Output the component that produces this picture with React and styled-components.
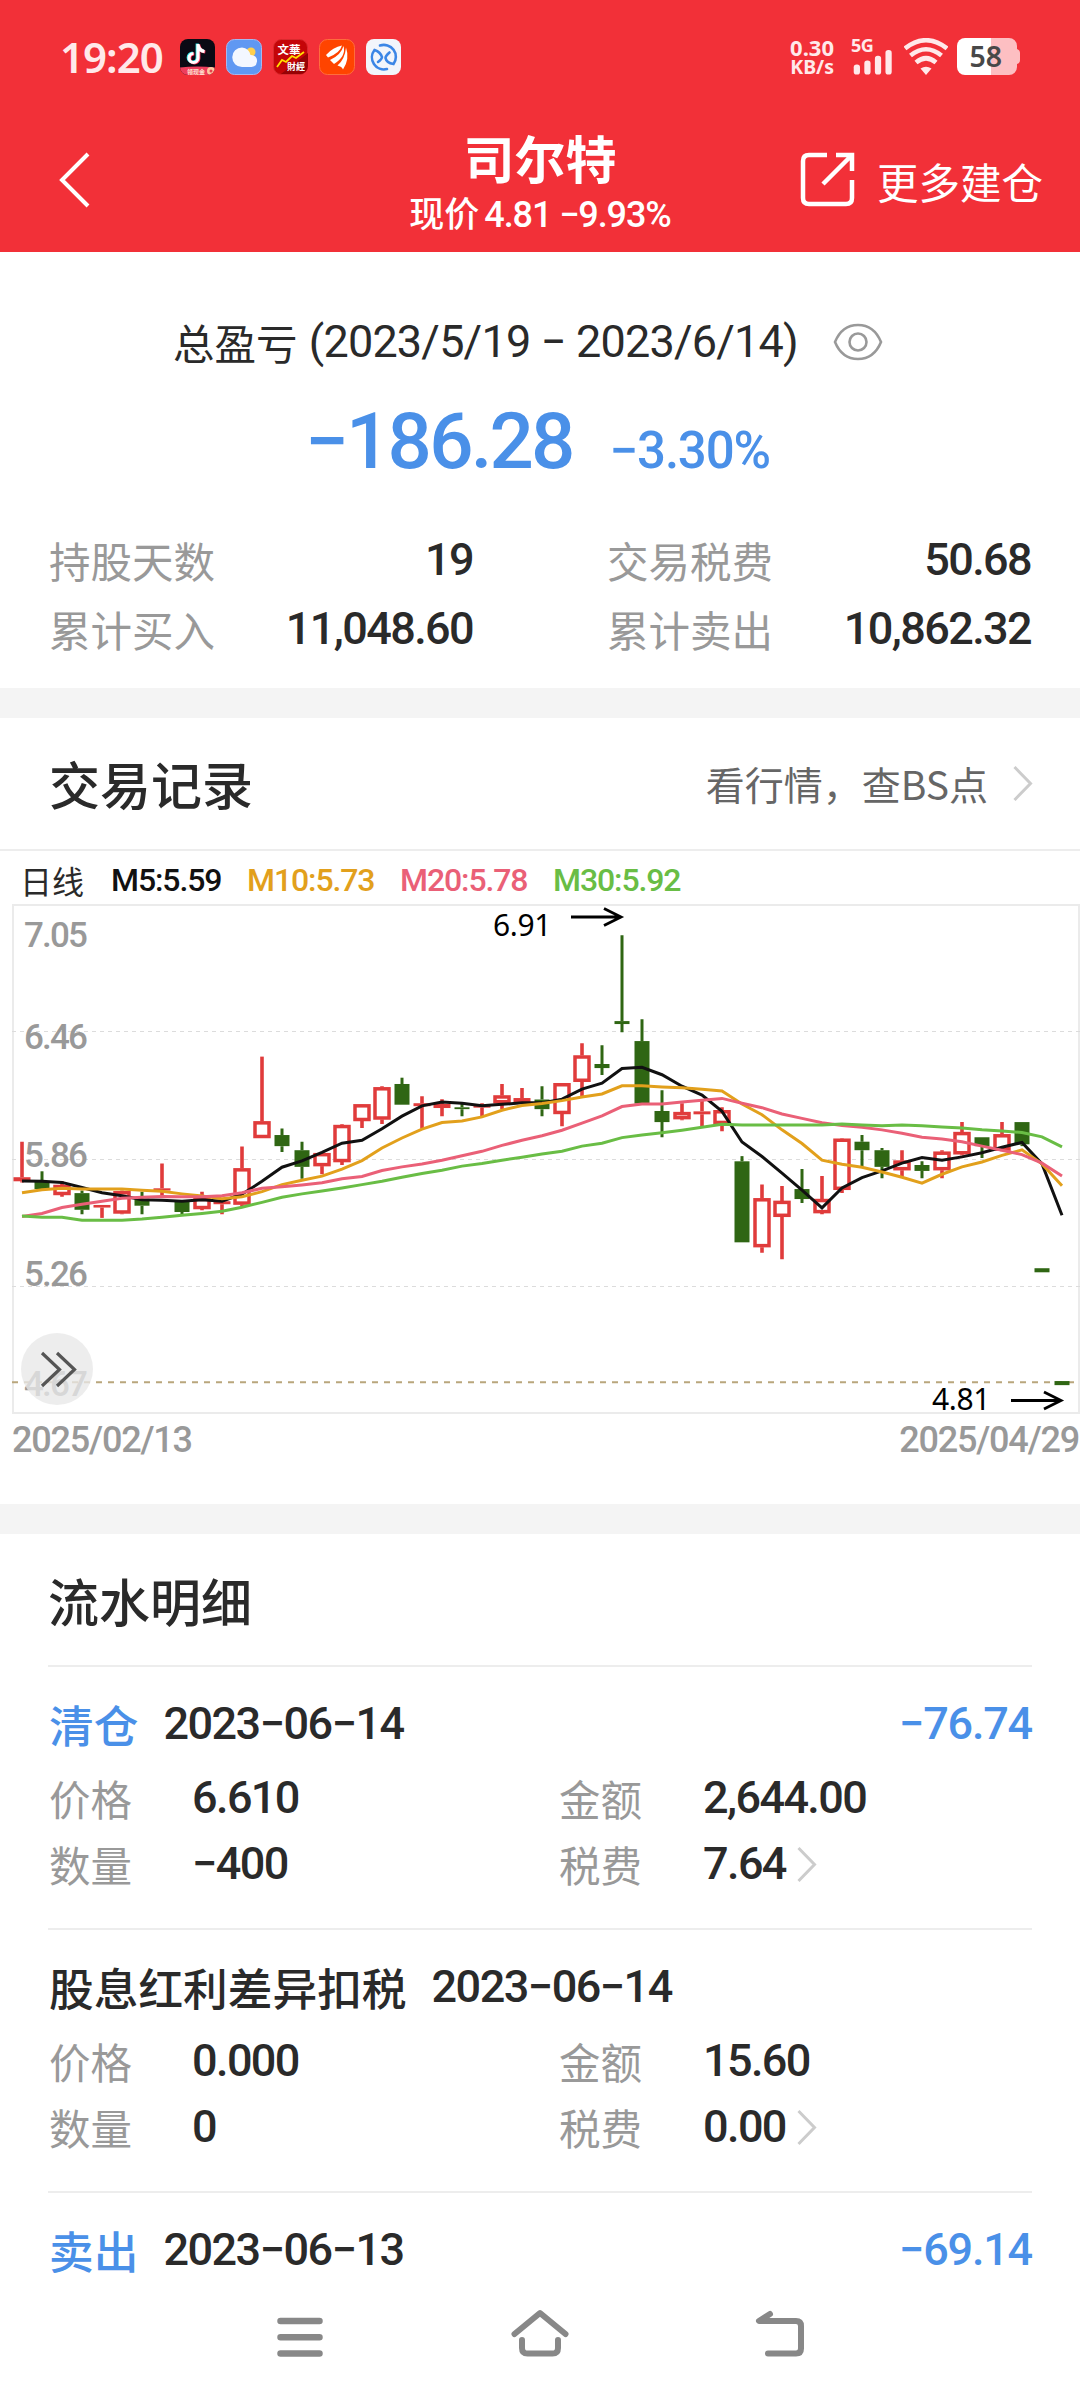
import React from "react";
import styled, { createGlobalStyle } from "styled-components";

const Global = createGlobalStyle`
  * { box-sizing: border-box; }
  html, body { margin: 0; padding: 0; background: #fff; }
`;

const CJK = `"Noto Sans CJK SC", sans-serif`;
const NUM = `Roboto, "Noto Sans CJK SC", sans-serif`;

const Screen = styled.div`
  width: 1080px;
  height: 2400px;
  overflow: hidden;
  display: flex;
  flex-direction: column;
  background: #fff;
  color: #2a2a2a;
  font-family: ${CJK};
`;

const Txt = styled.span`
  display: block;
  white-space: pre;
  font-family: ${CJK};
  font-size: ${(p) => p.$size || 41.5}px;
  line-height: ${(p) => p.$lh || 60}px;
  color: ${(p) => p.$color || "#2a2a2a"};
  font-weight: ${(p) => p.$weight || 400};
`;

const Num = styled.span`
  display: block;
  white-space: pre;
  font-family: ${NUM};
  font-weight: ${(p) => p.$weight || 500};
  font-size: ${(p) => p.$size || 45}px;
  line-height: ${(p) => p.$lh || 60}px;
  letter-spacing: ${(p) => (p.$ls === undefined ? -1.6 : p.$ls)}px;
  color: ${(p) => p.$color || "#2a2a2a"};
`;

const Header = styled.header`
  height: 252px;
  flex: none;
  background: #f23038;
  color: #fff;
  display: flex;
  flex-direction: column;
`;

const StatusBar = styled.div`
  height: 113px;
  padding: 0 60px;
  display: flex;
  align-items: center;
  justify-content: space-between;
`;

const StatusGroup = styled.div`
  display: flex;
  align-items: center;
  gap: ${(p) => p.$gap}px;
`;

const Clock = styled.span`
  width: 109px;
  white-space: nowrap;
  font-family: "Noto Sans", sans-serif;
  font-weight: 600;
  font-size: 42px;
  letter-spacing: -1px;
  line-height: 50px;
  color: #ffe9ea;
`;

const Speed = styled.div`
  width: 46px;
  margin-right: 8px;
  display: flex;
  flex-direction: column;
  align-items: flex-end;
  font-family: "Noto Sans", sans-serif;
  font-weight: 700;
  color: #ffe9ea;
`;

const SpeedLine = styled.span`
  font-size: ${(p) => p.$size}px;
  line-height: 20px;
`;

const TitleBar = styled.div`
  height: 139px;
  display: grid;
  grid-template-columns: 400px 280px 400px;
`;

const BackCell = styled.div`
  padding: 39px 0 0 58px;
`;

const TitleCell = styled.div`
  display: flex;
  flex-direction: column;
  align-items: center;
  padding-top: 11px;
`;

const PriceLine = styled.div`
  display: flex;
  align-items: baseline;
  gap: 5px;
`;

const MoreCell = styled.div`
  display: flex;
  align-items: flex-start;
  padding: 39px 0 0 120px;
  gap: 21px;
`;

const Summary = styled.section`
  height: 436px;
  flex: none;
  padding: 60px 49px 0;
  display: flex;
  flex-direction: column;
`;

const Period = styled.div`
  height: 60px;
  display: flex;
  align-items: center;
  padding-left: 124px;
`;

const PeriodDates = styled.div`
  padding-left: 2px;
`;

const EyeBox = styled.div`
  height: 60px;
  display: flex;
  align-items: center;
  margin-left: auto;
  padding-right: 148px;
`;

const Profit = styled.div`
  height: 130px;
  display: flex;
  align-items: baseline;
  padding: 5px 0 0 256px;
`;

const Stats = styled.div`
  display: grid;
  grid-template-columns: 424px 424px;
  column-gap: 134px;
  row-gap: 9px;
  padding-top: 28px;
`;

const Stat = styled.div`
  height: 60px;
  display: flex;
  justify-content: space-between;
`;

const Band = styled.div`
  height: 30px;
  flex: none;
  background: #f4f4f4;
`;

const RecordHead = styled.div`
  height: 133px;
  flex: none;
  border-bottom: 2px solid #ededed;
  padding: 0 47px 2px 49px;
  display: flex;
  align-items: center;
  justify-content: space-between;
`;

const LinkRow = styled.div`
  display: flex;
  align-items: center;
  gap: 25px;
`;

const Legend = styled.div`
  height: 53px;
  flex: none;
  padding: 5px 0 0 20px;
  display: flex;
  align-items: center;
`;

const LegendItem = styled.div`
  width: ${(p) => p.$w}px;
`;

const ChartBox = styled.div`
  height: 510px;
  flex: none;
  padding-left: 12px;
`;

const Dates = styled.div`
  height: 90px;
  flex: none;
  padding: 4px 1px 0 12px;
  display: flex;
  justify-content: space-between;
`;

const Flow = styled.section`
  flex: 1;
  min-height: 0;
  padding: 0 48px;
`;

const FlowHead = styled.div`
  height: 131px;
  display: flex;
  align-items: center;
`;

const Entry = styled.article`
  height: ${(p) => (p.$short ? 88 : 263)}px;
  border-top: 2px solid #ededed;
  padding-top: 27px;
`;

const EntryHead = styled.div`
  height: 74px;
  display: flex;
  padding-left: 1px;
`;

const EntryAmount = styled.div`
  margin-left: auto;
`;

const Fields = styled.div`
  display: grid;
  grid-template-columns: 143px 367px 144px 1fr;
  grid-auto-rows: 66px;
  padding-left: 1px;
`;

const FieldValue = styled.div`
  display: flex;
  gap: 11px;
`;

const NavBar = styled.nav`
  height: 120px;
  flex: none;
  background: #fff;
  display: grid;
  grid-template-columns: 240px 240px 240px;
  justify-content: center;
  justify-items: center;
  padding-top: 26px;
`;

const Chevron = () => (
  <svg width="20" height="60" viewBox="0 0 20 60">
    <path d="M1.5 14L17.5 30.5L1.5 47" fill="none" stroke="#ccc" strokeWidth="3" />
  </svg>
);

const TikTokIcon = () => (
  <svg width="35" height="36" viewBox="0 0 35 36">
    <clipPath id="tk"><rect width="35" height="36" rx="8" /></clipPath>
    <g clipPath="url(#tk)">
      <rect width="35" height="36" fill="#0a0a14" />
      <path d="M18 5v14a4.500 4.500 0 1 1-4.500-4.500M18 6c1 4 3 6 6.500 6.500" transform="translate(-.8 -.5)" fill="none" stroke="#25e5e5" strokeWidth="3.200" />
      <path d="M18 5v14a4.500 4.500 0 1 1-4.500-4.500M18 6c1 4 3 6 6.500 6.500" transform="translate(.8 .5)" fill="none" stroke="#ff3358" strokeWidth="3.200" />
      <path d="M18 5v14a4.500 4.500 0 1 1-4.500-4.500M18 6c1 4 3 6 6.500 6.500" fill="none" stroke="#fff" strokeWidth="3.200" />
      <path d="M0 28.500Q17 26.500 35 28.500V36H0z" fill="#ee3e5d" />
      <text x="7" y="34.500" fontSize="6" fontWeight="700" fill="#ffe2cf" fontFamily="Noto Sans CJK SC">领现金</text>
      <circle cx="31" cy="32" r="4" fill="#ffc9a0" />
      <circle cx="31" cy="32" r="1.500" fill="#e8414f" />
    </g>
  </svg>
);

const WeatherIcon = () => (
  <svg width="36" height="36" viewBox="0 0 36 36">
    <rect x=".5" y=".5" width="35" height="35" rx="8" fill="#6098f2" stroke="#a7b7ee" />
    <circle cx="25" cy="13" r="4.500" fill="#ffcf4d" />
    <path d="M16 8.500a9.700 9.700 0 1 0 0 19.500h9.500a6 6 0 0 0 1-11.800a6 6 0 0 0-2-.2A9.500 9.500 0 0 0 16 8.500z" fill="#f3f7ff" />
  </svg>
);

const FinanceIcon = () => (
  <svg width="35" height="36" viewBox="0 0 35 36">
    <rect x=".5" y=".5" width="34" height="35" rx="8" fill="#c40508" stroke="#d92a2e" />
    <path d="M8 35L35 14V27a8 8 0 0 1-8 8z" fill="#960205" />
    <text x="4.500" y="15" fontSize="11.500" fontWeight="700" fill="#fff" fontFamily="Noto Sans CJK SC">文華</text>
    <text x="14" y="31" fontSize="9" fontWeight="700" fill="#fff" fontFamily="Noto Sans CJK SC">財經</text>
    <path d="M4 28l5-7l4 2l6-6l4 2l8-6" fill="none" stroke="#ffe100" strokeWidth="1.800" />
  </svg>
);

const WingIcon = () => (
  <svg width="36" height="36" viewBox="0 0 36 36">
    <rect x=".5" y=".5" width="35" height="35" rx="8" fill="#ff4400" stroke="#ff6d3c" />
    <path d="M7 16Q14 8 23 6.500Q21 14 9 18.500zM11 21Q22 16 24.500 7Q27.500 17 15 25zM18.500 26.500Q26 20 27 8.500Q31 20 24 30.500Q23 27.500 18.500 26.500z" fill="#fff" />
  </svg>
);

const LoopIcon = () => (
  <svg width="35" height="36" viewBox="0 0 35 36">
    <rect width="35" height="36" rx="8" fill="#f2f5fb" />
    <g fill="none" stroke="#3b86e6" strokeWidth="2.600" strokeLinecap="round">
      <path d="M14 6.500A12 12 0 0 1 27.500 25q-7-1-8-6q0-2 4-5.500" />
      <path d="M21 30A12 12 0 0 1 8.500 11q6 2 7.500 7q0 2-4 5" />
    </g>
  </svg>
);

const SignalBox = styled.div`
  width: 42px;
  height: 37px;
  margin-right: 2px;
  display: flex;
  flex-direction: column;
`;

const NetLabel = styled.span`
  height: 12px;
  font: 700 18px/15px "Noto Sans", sans-serif;
  letter-spacing: -0.5px;
  color: #ffe9ea;
`;

const Signal = () => (
  <SignalBox>
    <NetLabel>5G</NetLabel>
    <svg width="42" height="26" viewBox="0 0 42 26">
      <g fill="#ffe9ea">
        <rect x="2" y="15" width="6.500" height="10.500" rx="3" />
        <rect x="13" y="11" width="6.500" height="14.500" rx="3" />
        <rect x="24" y="6" width="6.500" height="19.500" rx="3" />
        <rect x="35" y="0" width="6.500" height="25.500" rx="3" />
      </g>
    </svg>
  </SignalBox>
);

const Wifi = () => (
  <svg width="44" height="37" viewBox="0 0 44 37">
    <g fill="none" stroke="#ffe9ea" strokeWidth="4.600">
      <path d="M1 10.500Q22-6 43 10.500" />
      <path d="M6.500 17.500Q22 5 37.500 17.500" />
      <path d="M12 24.500Q22 16 32 24.500" />
    </g>
    <path d="M16.500 30.500Q22 27 27.500 30.500L22 37z" fill="#ffe9ea" />
  </svg>
);

const Battery = () => (
  <svg width="63" height="37" viewBox="0 0 63 37">
    <path d="M34 0h18a8 8 0 0 1 8 8v3q3 1 3 4v7q0 3-3 4v3a8 8 0 0 1-8 8H34z" fill="#fdbfc2" />
    <path d="M34 0H8a8 8 0 0 0-8 8v21a8 8 0 0 0 8 8h26z" fill="#fff" />
    <text x="12.500" y="28.500" fontSize="28.500" fontWeight="600" fill="#484848" fontFamily="Noto Sans">58</text>
  </svg>
);

const CHART_W = 1068;
const toY = (v) => (v - 37.5) / 2.703;
const toX = (i) => 10 + i * 20;

const candles = [
  ["r", 680, 776, 787, 790], ["g", 760, 788, 808, 808], ["r", 787, 797, 824, 829], ["g", 812, 819, 864, 876],
  ["r", 851, 851, 858, 886], ["r", 812, 814, 874, 876], ["g", 815, 834, 853, 876], ["r", 739, 806, 812, 825],
  ["g", 838, 840, 870, 876], ["r", 815, 832, 862, 865], ["r", 840, 841, 849, 876], ["r", 693, 752, 850, 854],
  ["r", 450, 625, 670, 670], ["g", 644, 662, 692, 708], ["g", 680, 703, 748, 780], ["r", 711, 711, 746, 768],
  ["r", 633, 635, 735, 743], ["r", 578, 579, 624, 643], ["r", 530, 533, 620, 632], ["g", 507, 524, 580, 580],
  ["r", 557, 576, 584, 645], ["r", 565, 578, 589, 611], ["g", 578, 587, 592, 611], ["r", 576, 582, 588, 612],
  ["r", 524, 555, 576, 592], ["r", 535, 562, 574, 576], ["g", 530, 566, 592, 611], ["r", 521, 522, 605, 638],
  ["r", 414, 447, 518, 560], ["g", 419, 470, 481, 500], ["g", 122, 354, 362, 384], ["g", 349, 408, 577, 577],
  ["g", 541, 597, 627, 668], ["r", 576, 600, 619, 622], ["r", 570, 598, 606, 638], ["r", 587, 595, 632, 652],
  ["g", 719, 733, 952, 952], ["r", 796, 833, 965, 980], ["r", 800, 840, 883, 998], ["g", 754, 808, 835, 846],
  ["r", 773, 835, 873, 876], ["r", 671, 672, 810, 819], ["g", 662, 680, 703, 747], ["g", 697, 703, 748, 779],
  ["r", 703, 731, 757, 775], ["g", 733, 743, 759, 779], ["r", 703, 707, 757, 779], ["r", 627, 654, 714, 717],
  ["g", 668, 668, 692, 724], ["r", 627, 660, 704, 706], ["g", 627, 627, 687, 692], ["g", 1022, 1022, 1033, 1033],
  ["g", 1327, 1327, 1338, 1338],
];

const averages = [
  ["#111", [786, 787, 790, 804, 818, 826, 837, 838, 841, 837, 841, 822, 787, 749, 732, 709, 684, 676, 645, 611, 583, 573, 576, 583, 579, 575, 575, 565, 538, 522, 482, 479, 499, 530, 554, 598, 681, 720, 765, 811, 859, 805, 777, 759, 738, 723, 730, 721, 710, 695, 682, 740, 879]],
  ["#e2a01c", [818, 810, 806, 808, 808, 808, 811, 814, 821, 827, 834, 829, 815, 796, 784, 773, 754, 731, 697, 670, 646, 628, 624, 613, 595, 582, 577, 569, 559, 551, 529, 529, 532, 534, 538, 543, 578, 607, 648, 685, 730, 741, 749, 762, 776, 792, 768, 748, 735, 717, 702, 740, 799]],
  ["#ea6077", [882, 874, 858, 849, 841, 833, 830, 828, 829, 829, 826, 818, 806, 802, 797, 791, 780, 774, 758, 748, 740, 730, 718, 706, 690, 676, 664, 649, 630, 610, 585, 578, 578, 573, 568, 563, 576, 588, 605, 617, 629, 636, 641, 648, 657, 668, 673, 680, 692, 703, 715, 738, 773]],
  ["#69bd45", [881, 884, 884, 892, 892, 892, 889, 884, 879, 874, 868, 857, 844, 830, 821, 813, 805, 796, 787, 776, 766, 757, 746, 739, 730, 722, 713, 706, 692, 684, 669, 662, 656, 649, 641, 633, 635, 635, 635, 635, 635, 632, 635, 637, 635, 637, 640, 643, 648, 651, 655, 667, 694]],
];

const ChartSvg = styled.svg`
  display: block;
  overflow: visible;
`;

const AxisText = styled.text`
  font-family: Roboto, sans-serif;
  font-weight: 500;
  font-size: 35px;
  letter-spacing: -1.8px;
  fill: #999;
`;

const MarkText = styled.text`
  font-family: "Noto Sans", sans-serif;
  font-weight: 400;
  font-size: 30px;
  letter-spacing: -0.4px;
  fill: #000;
`;

const Candle = ({ i, c }) => {
  const [kind, hi, top, bot, lo] = c;
  const x = toX(i);
  const color = kind === "r" ? "#e03b3b" : "#2f6613";
  const h = toY(bot) - toY(top);
  const hollow = kind === "r" && h > 6;
  return (
    <g>
      <path
        d={`M${x} ${toY(hi)}V${toY(top)}M${x} ${toY(bot)}V${toY(lo)}`}
        stroke={color}
        strokeWidth={kind === "r" ? 3.6 : 3}
      />
      {hollow ? (
        <rect x={x - 7} y={toY(top) + 1.5} width="14" height={h - 3} fill="#fff" stroke={color} strokeWidth="3.5" />
      ) : (
        <rect x={x - (kind === "r" ? 8.5 : 7.5)} y={toY(top)} width={kind === "r" ? 17 : 15} height={h} fill={color} />
      )}
    </g>
  );
};

const Arrow = ({ x, y }) => (
  <path d={`M${x - 51} ${y}H${x - 1}M${x - 18} ${y - 8.5}L${x - 1} ${y}L${x - 18} ${y + 8.5}`} fill="none" stroke="#000" strokeWidth="2.8" />
);

const KLine = () => (
  <ChartSvg width={CHART_W} height="510" viewBox={`0 0 ${CHART_W} 510`}>
    <rect x="1" y="1" width="1066" height="508" fill="none" stroke="#ebebeb" strokeWidth="2" />
    {[382, 727, 1072].map((v) => (
      <path key={v} d={`M0 ${Math.floor(toY(v)) + 0.5}H1068`} stroke="#dcdcdc" strokeWidth="1.2" strokeDasharray="4 4" />
    ))}
    <path d={`M0 ${toY(1330)}H1068`} stroke="#b9a67c" strokeWidth="2" strokeDasharray="6 6" />
    {candles.map((c, i) => <Candle key={i} i={i} c={c} />)}
    <AxisText x="12" y="43">7.05</AxisText>
    <AxisText x="12" y="145">6.46</AxisText>
    <AxisText x="12" y="263">5.86</AxisText>
    <AxisText x="12" y="382">5.26</AxisText>
    <AxisText x="12" y="492">4.67</AxisText>
    {averages.map(([color, pts]) => (
      <polyline key={color} points={pts.map((v, i) => `${toX(i)},${toY(v)}`).join(" ")} fill="none" stroke={color} strokeWidth="3" />
    ))}
    <MarkText x="481" y="31.5">6.91</MarkText>
    <Arrow x={610} y={13} />
    <MarkText x="920" y="506">4.81</MarkText>
    <Arrow x={1050} y={496.5} />
    <circle cx="45" cy="465" r="36" fill="#e8e8e8" fillOpacity=".78" />
    <path d="M30 449l17.500 16.500L30 482M45 449l17.500 16.500L45 482" fill="none" stroke="#555" strokeWidth="3.200" />
  </ChartSvg>
);

const entries = [
  { type: "清仓", color: "#4a90e8", date: "2023−06−14", amount: "−76.74", price: "6.610", total: "2,644.00", qty: "−400", fee: "7.64" },
  { type: "股息红利差异扣税", date: "2023−06−14", price: "0.000", total: "15.60", qty: "0", fee: "0.00" },
  { type: "卖出", color: "#4a90e8", date: "2023−06−13", amount: "−69.14" },
];

const DateGap = styled.div`
  padding-left: ${(p) => p.$gap || 25}px;
`;

const EntryRow = ({ e }) => (
  <Entry $short={!e.price}>
    <EntryHead>
      <Txt $size={44.7} $weight={500} $color={e.color}>{e.type}</Txt>
      <DateGap><Num $ls={-1.5}>{e.date}</Num></DateGap>
      {e.amount && <EntryAmount><Num $ls={-1.2} $color="#4a90e8">{e.amount}</Num></EntryAmount>}
    </EntryHead>
    {e.price && (
      <Fields>
        <Txt $color="#999">价格</Txt>
        <Num>{e.price}</Num>
        <Txt $color="#999">金额</Txt>
        <Num>{e.total}</Num>
        <Txt $color="#999">数量</Txt>
        <Num>{e.qty}</Num>
        <Txt $color="#999">税费</Txt>
        <FieldValue><Num>{e.fee}</Num><Chevron /></FieldValue>
      </Fields>
    )}
  </Entry>
);

export default function App() {
  return (
    <Screen>
      <Global />
      <Header>
        <StatusBar>
          <StatusGroup $gap={11}>
            <Clock>19:20</Clock>
            <TikTokIcon />
            <WeatherIcon />
            <FinanceIcon />
            <WingIcon />
            <LoopIcon />
          </StatusGroup>
          <StatusGroup $gap={9}>
            <Speed>
              <SpeedLine $size={22}>0.30</SpeedLine>
              <SpeedLine $size={19.5}>KB/s</SpeedLine>
            </Speed>
            <Signal />
            <Wifi />
            <Battery />
          </StatusGroup>
        </StatusBar>
        <TitleBar>
          <BackCell>
            <svg width="34" height="56" viewBox="0 0 34 56">
              <path d="M30 2L4 28L30 54" fill="none" stroke="#fff" strokeWidth="4" />
            </svg>
          </BackCell>
          <TitleCell>
            <Txt $size={51} $lh={66} $weight={700} $color="#fff">司尔特</Txt>
            <PriceLine>
              <Txt $size={35} $lh={44} $weight={500} $color="#fff">现价</Txt>
              <Num $size={36} $lh={44} $ls={-1.1} $color="#fff">4.81 −9.93%</Num>
            </PriceLine>
          </TitleCell>
          <MoreCell>
            <svg width="56" height="56" viewBox="0 0 56 56">
              <path d="M27 3H9Q3 3 3 9V46Q3 52 9 52H46Q52 52 52 46V28M36 3H52V19M52 3L23 32" fill="none" stroke="#fff" strokeWidth="4.500" />
            </svg>
            <Txt $lh={58} $color="#fff">更多建仓</Txt>
          </MoreCell>
        </TitleBar>
      </Header>

      <Summary>
        <Period>
          <Txt>总盈亏 </Txt>
          <PeriodDates><Num $weight={400} $lh={64} $ls={-0.8}>(2023/5/19 − 2023/6/14)</Num></PeriodDates>
          <EyeBox>
            <svg width="50" height="38" viewBox="0 0 50 38">
              <path d="M2 19Q9 2 25 2T48 19Q41 36 25 36T2 19z" fill="none" stroke="#999" strokeWidth="2.600" />
              <circle cx="25" cy="19" r="8.500" fill="none" stroke="#999" strokeWidth="2.600" />
            </svg>
          </EyeBox>
        </Period>
        <Profit>
          <Num $size={78} $lh={130} $ls={-2.8} $color="#4a90e8">−186.28</Num>
          <DateGap $gap={37}><Num $size={51} $lh={130} $ls={-1.2} $color="#4a90e8">−3.30%</Num></DateGap>
        </Profit>
        <Stats>
          <Stat><Txt $color="#999">持股天数</Txt><Num>19</Num></Stat>
          <Stat><Txt $color="#999">交易税费</Txt><Num>50.68</Num></Stat>
          <Stat><Txt $color="#999">累计买入</Txt><Num>11,048.60</Num></Stat>
          <Stat><Txt $color="#999">累计卖出</Txt><Num>10,862.32</Num></Stat>
        </Stats>
      </Summary>

      <Band />
      <RecordHead>
        <Txt $size={51} $weight={500}>交易记录</Txt>
        <LinkRow>
          <Txt $size={39} $color="#666">看行情，查BS点</Txt>
          <Chevron />
        </LinkRow>
      </RecordHead>
      <Legend>
        <LegendItem $w={91}><Txt $size={32} $lh={44}>日线</Txt></LegendItem>
        <LegendItem $w={136}><Num $size={32} $lh={44} $ls={-1.1} $color="#111">M5:5.59</Num></LegendItem>
        <LegendItem $w={153}><Num $size={32} $lh={44} $ls={-1.1} $color="#e2a01c">M10:5.73</Num></LegendItem>
        <LegendItem $w={153}><Num $size={32} $lh={44} $ls={-1.1} $color="#ea6077">M20:5.78</Num></LegendItem>
        <LegendItem $w={153}><Num $size={32} $lh={44} $ls={-1.1} $color="#69bd45">M30:5.92</Num></LegendItem>
      </Legend>
      <ChartBox><KLine /></ChartBox>
      <Dates>
        <Num $size={36} $lh={44} $ls={-1.2} $color="#999">2025/02/13</Num>
        <Num $size={36} $lh={44} $ls={-1.2} $color="#999">2025/04/29</Num>
      </Dates>

      <Band />
      <Flow>
        <FlowHead><Txt $size={51} $weight={500}>流水明细</Txt></FlowHead>
        {entries.map((e) => <EntryRow key={e.type} e={e} />)}
      </Flow>
      <NavBar>
        <svg width="60" height="60" viewBox="0 0 60 60">
          <path d="M10.500 15H49.500M10.500 31.300H49.500M10.500 47.600H49.500" stroke="#888" strokeWidth="6.500" strokeLinecap="round" />
        </svg>
        <svg width="60" height="60" viewBox="0 0 60 60">
          <path d="M4.500 28L30 7L55.500 28M12 34V42Q12 47.600 17.500 47.600H42.500Q48 47.600 48 42V34" fill="none" stroke="#888" strokeWidth="6" strokeLinecap="round" strokeLinejoin="round" />
        </svg>
        <svg width="60" height="60" viewBox="0 0 60 60">
          <path d="M20 8L9 15H46Q51 15 51 20V42.600Q51 47.600 46 47.600H18" fill="none" stroke="#888" strokeWidth="6" strokeLinecap="round" strokeLinejoin="round" />
        </svg>
      </NavBar>
    </Screen>
  );
}
